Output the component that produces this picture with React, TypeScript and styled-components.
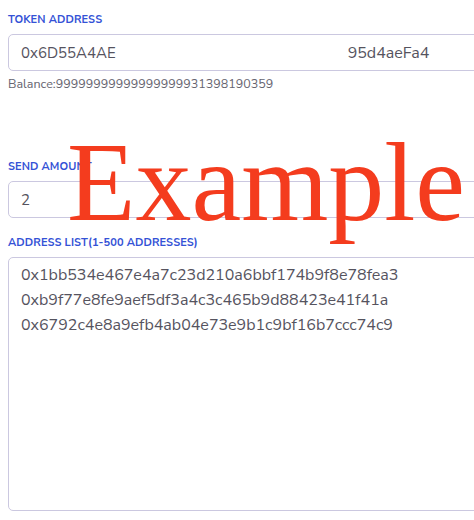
import React from "react";
import styled, { createGlobalStyle } from "styled-components";

const Global = createGlobalStyle`
  html, body { margin: 0; padding: 0; background: #fff; overflow: hidden; }
  body { font-family: "Nunito Sans", Lato, "Noto Sans", sans-serif; }
`;

const Page = styled.div`
  position: relative;
  width: 474px;
  height: 520px;
  overflow: hidden;
`;

const Form = styled.div`
  width: 500px;
  padding: 13px 0 0 8px;
  display: flex;
  flex-direction: column;
`;

const Label = styled.div<{ $mt?: number }>`
  margin-top: ${(p) => p.$mt ?? 0}px;
  font-size: 11px;
  font-weight: 700;
  color: #3452d6;
  letter-spacing: 0.1px;
  line-height: 13px;
`;

const Field = styled.div`
  margin-top: 8px;
  box-sizing: border-box;
  height: 37px;
  border: 1px solid #cbc8e0;
  border-radius: 5px;
  padding: 0 12px;
  display: flex;
  align-items: center;
  font-size: 15px;
  color: #55535e;
`;

const Gap = styled.span`
  width: 232px;
  flex: none;
`;

const Tail = styled.span`
  font-size: 16px;
`;

const Balance = styled.div`
  margin-top: 5px;
  font-size: 12.5px;
  color: #666570;
  line-height: 16px;
`;

const TextArea = styled.div`
  margin-top: 8px;
  box-sizing: border-box;
  height: 254px;
  border: 1px solid #cbc8e0;
  border-radius: 5px;
  padding: 5px 12px;
  font-size: 16px;
  line-height: 25px;
  color: #55535e;
`;

const Watermark = styled.div`
  position: absolute;
  left: 67px;
  top: 120px;
  font-family: "Liberation Serif", "Times New Roman", serif;
  font-size: 112px;
  line-height: 124px;
  color: #f43c1e;
  pointer-events: none;
`;

export default function App() {
  return (
    <Page>
      <Global />
      <Form>
        <Label>TOKEN ADDRESS</Label>
        <Field>
          0x6D55A4AE<Gap />
          <Tail>95d4aeFa4</Tail>
        </Field>
        <Balance>Balance:99999999999999999931398190359</Balance>
        <Label $mt={68}>SEND AMOUNT</Label>
        <Field>2</Field>
        <Label $mt={18}>ADDRESS LIST(1-500 ADDRESSES)</Label>
        <TextArea>
          <div>0x1bb534e467e4a7c23d210a6bbf174b9f8e78fea3</div>
          <div>0xb9f77e8fe9aef5df3a4c3c465b9d88423e41f41a</div>
          <div>0x6792c4e8a9efb4ab04e73e9b1c9bf16b7ccc74c9</div>
        </TextArea>
      </Form>
      <Watermark>Example</Watermark>
    </Page>
  );
}
